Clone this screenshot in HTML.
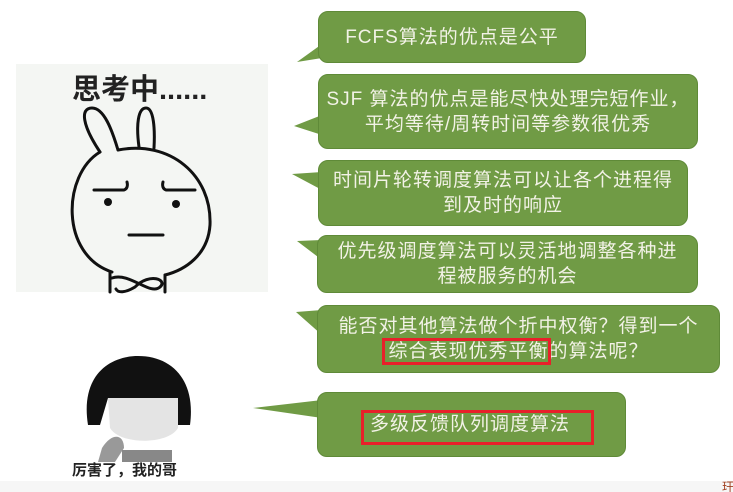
<!DOCTYPE html>
<html><head><meta charset="utf-8"><style>
body{margin:0;width:733px;height:492px;background:#fff;position:relative;overflow:hidden;font-family:"Liberation Sans","Noto Sans CJK SC",sans-serif}
.b{position:absolute;background:#709b45;border-radius:10px;color:#f2f2e6;font-size:19px;line-height:25px;letter-spacing:1px;text-align:center;display:flex;align-items:center;justify-content:center;border:1px solid #5f8a38;box-sizing:border-box;white-space:nowrap}
.r{position:absolute;border:3px solid #e8202a;box-sizing:border-box}
svg{position:absolute;left:0;top:0}
</style></head><body>
<div style="position:absolute;left:0;top:481px;width:733px;height:11px;background:#f6f6f6"></div>
<div style="position:absolute;left:16px;top:64px;width:252px;height:228px;background:#f4f6f3"></div>
<svg width="733" height="492">
<g fill="#709b45">
<polygon points="297,62 322,44 322,58"/>
<polygon points="294,126 322,115 322,135"/>
<polygon points="292,174 322,172 322,190"/>
<polygon points="297,241 322,240 322,260"/>
<polygon points="296,312 322,310 322,335"/>
<polygon points="253,408 322,400 322,418"/>
</g>
<g fill="none" stroke="#111" stroke-width="3" stroke-linecap="round">
<path d="M100,152 C82,125 80,108 92,108 C104,108 112,130 118,150"/>
<path d="M139,147 C136,125 138,108 146,108 C154,108 155,130 154,148"/>
<path d="M100,152 C62,175 60,255 112,272 M118,150 C170,140 212,175 210,225 C208,255 185,270 165,275"/>
<path d="M94,190 L124,190 C127,189 128,186 127,182 M195,190 L166,190 C163,189 162,186 163,182"/>
<path d="M129,235 L163,235"/>
<path d="M110,272 L110,292 M165,275 L165,292 M112,278 C130,272 150,296 160,287 C168,280 150,272 135,287 C125,293 118,293 116,289"/>
</g>
<circle cx="108" cy="202" r="4" fill="#111"/><circle cx="176" cy="204" r="4" fill="#111"/>
<text x="72" y="99" font-size="29" font-weight="bold" font-family="Liberation Sans,Noto Sans CJK SC,sans-serif" fill="#222">思考中......</text>
<path d="M88,425 C80,375 110,356 138,356 C172,356 196,380 190,425 L178,425 L178,398 L108,398 L100,425Z" fill="#111"/>
<path d="M108,398 L178,398 L178,428 C168,445 120,445 110,428Z" fill="#e4e4e4"/>
<path d="M102,448 C112,432 124,434 124,448 L115,462 L98,462Z" fill="#999"/>
<path d="M122,450 L172,450 L172,462 L122,462Z" fill="#888"/>
<text x="72" y="475" font-size="15" font-weight="bold" font-family="Liberation Sans,Noto Sans CJK SC,sans-serif" fill="#222">厉害了，我的哥</text>
<text x="722" y="491" font-size="12" fill="#a04020">玕</text>
</svg>
<div class="b" style="left:318px;top:11px;width:268px;height:52px">FCFS算法的优点是公平</div>
<div class="b" style="left:318px;top:74px;width:380px;height:75px">SJF 算法的优点是能尽快处理完短作业，<br>平均等待/周转时间等参数很优秀</div>
<div class="b" style="left:318px;top:160px;width:370px;height:66px">时间片轮转调度算法可以让各个进程得<br>到及时的响应</div>
<div class="b" style="left:317px;top:235px;width:381px;height:58px">优先级调度算法可以灵活地调整各种进<br>程被服务的机会</div>
<div class="b" style="left:317px;top:305px;width:403px;height:68px">能否对其他算法做个折中权衡？得到一个<br>综合表现优秀平衡的算法呢？</div>
<div class="b" style="left:317px;top:392px;width:309px;height:65px;justify-content:flex-start;padding-left:52px">多级反馈队列调度算法</div>
<div class="r" style="left:382px;top:338px;width:169px;height:27px"></div>
<div class="r" style="left:361px;top:410px;width:233px;height:35px"></div>
</body></html>
